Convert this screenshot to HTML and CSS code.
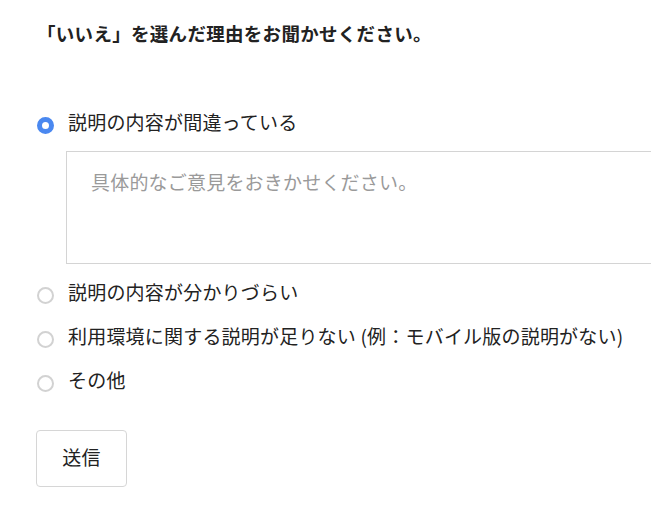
FILE: index.html
```
<!DOCTYPE html>
<html lang="ja">
<head>
<meta charset="utf-8">
<link rel="stylesheet" href="styles.css">
</head>
<body>
<form class="feedback">
  <h2 class="title">「いいえ」を選んだ理由をお聞かせください。</h2>
  <div class="options">
    <label class="option">
      <span class="radio checked"></span>
      <span class="label-text">説明の内容が間違っている</span>
    </label>
    <textarea class="comment" placeholder="具体的なご意見をおきかせください。"></textarea>
    <label class="option">
      <span class="radio"></span>
      <span class="label-text">説明の内容が分かりづらい</span>
    </label>
    <label class="option">
      <span class="radio"></span>
      <span class="label-text">利用環境に関する説明が足りない (例：モバイル版の説明がない)</span>
    </label>
    <label class="option">
      <span class="radio"></span>
      <span class="label-text">その他</span>
    </label>
  </div>
  <button type="button" class="submit">送信</button>
</form>
</body>
</html>
```
FILE: styles.css
```
html, body {
  margin: 0;
  padding: 0;
  background: #fff;
}
body {
  font-family: "Noto Sans CJK JP", "Noto Sans", sans-serif;
  color: #222;
  overflow: hidden;
}
.feedback {
  padding: 21px 0 0 37px;
  width: 614px;
}
.title {
  margin: 0;
  font-size: 18.5px;
  line-height: 24px;
  letter-spacing: 0.3px;
  font-weight: 700;
  color: #222;
}
.options {
  margin-top: 58px;
  display: flex;
  flex-direction: column;
}
.option {
  display: flex;
  align-items: center;
  height: 44px;
  gap: 14px;
  font-size: 19px;
  letter-spacing: 0.2px;
  color: #222;
  white-space: nowrap;
}
.label-text {
  padding-bottom: 7px;
  line-height: 26px;
}
.radio {
  box-sizing: border-box;
  width: 17px;
  height: 17px;
  border-radius: 50%;
  border: 2px solid #d2d2d2;
  flex: none;
  background: #fff;
}
.radio.checked {
  border: 5px solid #4a88f0;
}
.comment {
  box-sizing: border-box;
  margin: 4px 0 9px 29px;
  width: 586px;
  height: 113px;
  padding: 17px 24px;
  border: 1px solid #d4d4d4;
  border-right: none;
  border-radius: 0;
  font-family: "Noto Sans CJK JP", "Noto Sans", sans-serif;
  font-size: 19px;
  letter-spacing: 0.2px;
  line-height: 26px;
  resize: none;
  outline: none;
}
.comment::placeholder {
  color: #9a9a9a;
}
.submit {
  margin-top: 25px;
  margin-left: -1px;
  width: 91px;
  height: 57px;
  padding: 0 0 5px;
  background: #fff;
  border: 1px solid #d6d6d6;
  border-radius: 4px;
  font-family: "Noto Sans CJK JP", "Noto Sans", sans-serif;
  font-size: 19px;
  letter-spacing: 0.2px;
  color: #222;
  cursor: pointer;
}
```
